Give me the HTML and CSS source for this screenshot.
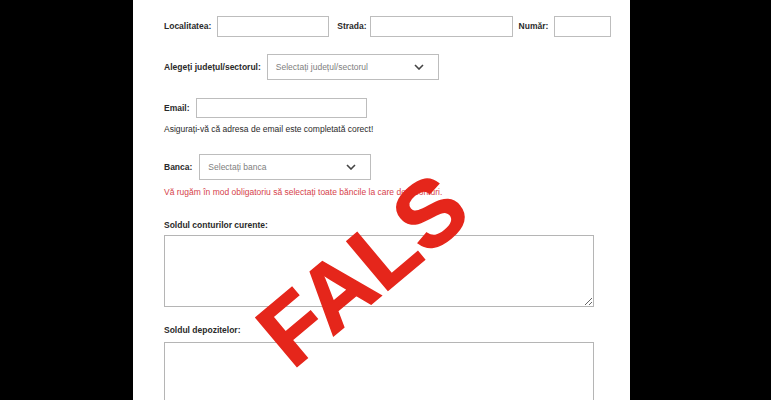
FILE: index.html
```html
<!DOCTYPE html>
<html lang="ro">
<head>
<meta charset="utf-8">
<link rel="stylesheet" href="styles.css">
</head>
<body>
<div class="page">
  <div class="row row-address">
    <span class="label">Localitatea:</span>
    <span class="field w-loc"></span>
    <span class="label sp sp-str">Strada:</span>
    <span class="field w-str"></span>
    <span class="label sp sp-nr">Număr:</span>
    <span class="field w-nr"></span>
  </div>
  <div class="row row-county">
    <span class="label">Alegeți județul/sectorul:</span>
    <span class="select">
      <span class="ph">Selectați județul/sectorul</span>
      <svg class="chev" width="10" height="6" viewBox="0 0 10 6"><path d="M1 1 L5 5 L9 1" fill="none" stroke="#444" stroke-width="1.6"/></svg>
    </span>
  </div>
  <div class="row row-email">
    <span class="label">Email:</span>
    <span class="field w-mail"></span>
  </div>
  <p class="note">Asigurați-vă că adresa de email este completată corect!</p>
  <div class="row row-bank">
    <span class="label">Banca:</span>
    <span class="select">
      <span class="ph">Selectați banca</span>
      <svg class="chev" width="10" height="6" viewBox="0 0 10 6"><path d="M1 1 L5 5 L9 1" fill="none" stroke="#444" stroke-width="1.6"/></svg>
    </span>
  </div>
  <p class="note warn">Vă rugăm în mod obligatoriu să selectați toate băncile la care deții conturi.</p>
  <p class="label block first">Soldul conturilor curente:</p>
  <textarea class="area"></textarea>
  <p class="label block second">Soldul depozitelor:</p>
  <textarea class="area"></textarea>
  <div class="stamp">FALS</div>
</div>
</body>
</html>
```
FILE: styles.css
```css
html, body {
  margin: 0;
  padding: 0;
  background: #000;
}
body {
  font-family: "Liberation Sans", Arial, sans-serif;
  font-size: 8.5px;
  color: #222;
}
.page {
  position: relative;
  width: 466px;
  height: 400px;
  margin-left: 133px;
  padding-left: 31px;
  background: #fff;
  overflow: hidden;
}
.row {
  display: flex;
  align-items: center;
}
.label {
  font-weight: bold;
  color: #2a2a2a;
  line-height: 11px;
  margin-right: 6px;
}
.label.sp {
  margin-left: 8px;
}
.label.sp-str {
  margin-right: 3px;
}
.label.sp-nr {
  margin-left: 6px;
}
.field {
  display: block;
  box-sizing: border-box;
  border: 1px solid #bdbdbd;
  background: #fff;
}
.row-address {
  padding-top: 16px;
}
.row-address .field {
  height: 21px;
}
.w-loc { width: 112px; }
.w-str { width: 143px; }
.w-nr { width: 57px; }
.row-county {
  margin-top: 17px;
}
.row-county .label {
  margin-right: 6px;
}
.select {
  box-sizing: border-box;
  width: 172px;
  height: 26px;
  border: 1px solid #bdbdbd;
  display: flex;
  align-items: center;
  justify-content: space-between;
  padding: 0 14px 0 8px;
  background: #fff;
}
.ph {
  color: #808080;
  font-size: 8.5px;
}
.chev {
  display: block;
}
.row-email {
  margin-top: 18px;
}
.row-email .label {
  margin-right: 6px;
}
.w-mail {
  width: 171px;
  height: 20px;
}
.note {
  margin: 6px 0 0;
  line-height: 11px;
  color: #2a2a2a;
}
.row-bank {
  margin-top: 19px;
}
.row-bank .label {
  margin-right: 7px;
}
.warn {
  margin-top: 7px;
  color: #d6434b;
}
.block {
  display: block;
  margin: 0;
}
.first {
  margin-top: 22px;
}
.second {
  margin-top: 18px;
}
.area {
  display: block;
  box-sizing: border-box;
  width: 430px;
  height: 72px;
  margin: 4px 0 0;
  border: 1px solid #b5b5b5;
  background: #fff;
  padding: 0;
}
.second + .area {
  margin-top: 6px;
}
.stamp {
  position: absolute;
  left: 230px;
  top: 270px;
  transform: translate(-50%, -50%) rotate(-40deg);
  font-family: "Liberation Sans", Arial, sans-serif;
  font-weight: bold;
  font-size: 93px;
  line-height: 1;
  color: #e5261b;
  -webkit-text-stroke: 1.5px #e5261b;
  white-space: nowrap;
}
```
